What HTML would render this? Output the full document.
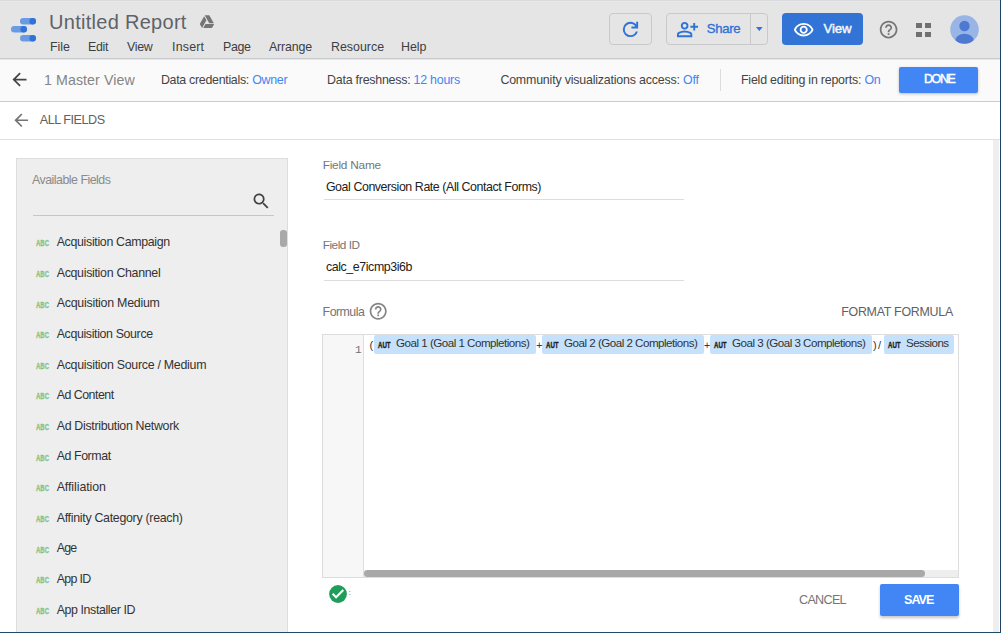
<!DOCTYPE html>
<html><head><meta charset="utf-8"><style>
html,body{margin:0;padding:0;}
body{width:1002px;height:634px;position:relative;overflow:hidden;background:#ffffff;font-family:"Liberation Sans", sans-serif;}
svg{display:block;}
</style></head><body>
<div style="position:absolute;left:0px;top:0px;width:1002px;height:58px;background:#e5e5e5;"></div>
<div style="position:absolute;left:0px;top:1px;width:1002px;height:1px;background:#e8e8e7;"></div>
<div style="position:absolute;left:0px;top:0px;width:1002px;height:1px;background:#dadbde;"></div>
<div style="position:absolute;left:0px;top:58px;width:1002px;height:1px;background:#c9cacd;"></div>
<svg style="position:absolute;left:20.10px;top:17.60px;" width="16" height="7" viewBox="0 0 16 7"><rect x="0" y="0" width="16" height="6.6" rx="3.3" fill="#6a9be2"/><circle cx="12.7" cy="3.3" r="3.3" fill="#2f72d8"/></svg>
<svg style="position:absolute;left:11.00px;top:26.10px;" width="16" height="7" viewBox="0 0 16 7"><rect x="0" y="0" width="16" height="6.6" rx="3.3" fill="#6a9be2"/><circle cx="12.7" cy="3.3" r="3.3" fill="#2f72d8"/></svg>
<svg style="position:absolute;left:20.10px;top:34.60px;" width="16" height="7" viewBox="0 0 16 7"><rect x="0" y="0" width="16" height="6.6" rx="3.3" fill="#6a9be2"/><circle cx="12.7" cy="3.3" r="3.3" fill="#2f72d8"/></svg>
<div id="title" style="position:absolute;left:49.00px;top:1.77px;line-height:40px;font-size:20px;color:#5f6368;font-weight:400;letter-spacing:0.286px;white-space:nowrap;">Untitled Report</div>
<svg style="position:absolute;left:199.20px;top:13.60px;" width="16" height="16" viewBox="0 0 24 24"><path fill="#757575" d="M7.71,3.5L1.15,15L4.58,21L11.13,9.5M9.73,15L6.3,21H19.42L22.85,15M22.28,14L15.42,2H8.58L8.57,2L15.43,14H22.28Z"/></svg>
<div id="menu0" style="position:absolute;left:50.00px;top:26.70px;line-height:40px;font-size:12.4px;color:#3c4043;font-weight:400;letter-spacing:0.0px;white-space:nowrap;">File</div>
<div id="menu1" style="position:absolute;left:88.00px;top:26.70px;line-height:40px;font-size:12.4px;color:#3c4043;font-weight:400;letter-spacing:-0.333px;white-space:nowrap;">Edit</div>
<div id="menu2" style="position:absolute;left:127.00px;top:26.70px;line-height:40px;font-size:12.4px;color:#3c4043;font-weight:400;letter-spacing:-0.333px;white-space:nowrap;">View</div>
<div id="menu3" style="position:absolute;left:172.00px;top:26.70px;line-height:40px;font-size:12.4px;color:#3c4043;font-weight:400;letter-spacing:0.2px;white-space:nowrap;">Insert</div>
<div id="menu4" style="position:absolute;left:223.00px;top:26.70px;line-height:40px;font-size:12.4px;color:#3c4043;font-weight:400;letter-spacing:-0.333px;white-space:nowrap;">Page</div>
<div id="menu5" style="position:absolute;left:269.00px;top:26.70px;line-height:40px;font-size:12.4px;color:#3c4043;font-weight:400;letter-spacing:-0.167px;white-space:nowrap;">Arrange</div>
<div id="menu6" style="position:absolute;left:331.00px;top:26.70px;line-height:40px;font-size:12.4px;color:#3c4043;font-weight:400;letter-spacing:0.0px;white-space:nowrap;">Resource</div>
<div id="menu7" style="position:absolute;left:401.00px;top:26.70px;line-height:40px;font-size:12.4px;color:#3c4043;font-weight:400;letter-spacing:0.0px;white-space:nowrap;">Help</div>
<div style="position:absolute;left:609px;top:13px;width:43px;height:32px;box-sizing:border-box;border:1px solid #c8c9cb;border-radius:4px;"></div>
<svg style="position:absolute;left:619.20px;top:18.20px;" width="22.95" height="22.95" viewBox="0 -960 960 960"><path fill="#2f72d8" d="M480-160q-134 0-227-93t-93-227q0-134 93-227t227-93q69 0 132 28.5T720-690v-110h80v280H520v-80h168q-32-56-87.5-88T480-720q-100 0-170 70t-70 170q0 100 70 170t170 70q77 0 139-44t87-116h84q-28 106-114 173t-196 67Z"/></svg>
<div style="position:absolute;left:666px;top:13px;width:102px;height:32px;box-sizing:border-box;border:1px solid #c8c9cb;border-radius:4px;"></div>
<div style="position:absolute;left:750px;top:13px;width:1px;height:32px;background:#c8c9cb;"></div>
<svg style="position:absolute;left:675.84px;top:20.00px;" width="23" height="23" viewBox="0 -960 960 960"><path fill="#2f72d8" d="M720-520v-120H600v-80h120v-120h80v120h120v80H800v120h-80Zm-360-40q-66 0-113-47t-47-113q0-66 47-113t113-47q66 0 113 47t47 113q0 66-47 113t-113 47ZM40-240v-112q0-34 17.5-62.5T104-458q62-31 126-46.5T360-520q66 0 130 15.5T616-458q29 15 46.5 43.5T680-352v112H40Zm80-80h480v-32q0-11-5.5-20T580-386q-54-27-109-40.5T360-440q-56 0-111 13.5T140-386q-9 5-14.5 14t-5.5 20v32Zm240-320q33 0 56.5-23.5T440-720q0-33-23.5-56.5T360-800q-33 0-56.5 23.5T280-720q0 33 23.5 56.5T360-640Zm0-80Zm0 400Z"/></svg>
<div id="share" style="position:absolute;left:706.70px;top:8.83px;line-height:40px;font-size:13.2px;color:#2f72d8;font-weight:400;letter-spacing:-0.3px;white-space:nowrap;-webkit-text-stroke:0.35px #2f72d8;">Share</div>
<svg style="position:absolute;left:755.80px;top:26.60px;" width="7" height="4.2" viewBox="0 0 7 4.2"><path d="M0 0h6.6L3.3 4.1z" fill="#2f72d8"/></svg>
<div style="position:absolute;left:782px;top:13px;width:81px;height:32px;background:#3174d6;border-radius:4px;"></div>
<svg style="position:absolute;left:793.10px;top:18.80px;" width="21.4" height="21.4" viewBox="0 0 24 24"><path fill="#ffffff" d="M12 6.5c3.79 0 7.17 2.13 8.82 5.5-1.65 3.37-5.02 5.5-8.82 5.5S4.83 15.37 3.18 12C4.830 8.63 8.21 6.5 12 6.5m0-2C7 4.5 2.73 7.61 1 12c1.73 4.39 6 7.5 11 7.5s9.27-3.11 11-7.5c-1.73-4.39-6-7.5-11-7.5zm0 5c1.38 0 2.5 1.12 2.5 2.5s-1.12 2.5-2.5 2.5-2.5-1.120-2.5-2.5 1.12-2.5 2.5-2.5m0-2c-2.48 0-4.5 2.02-4.5 4.5s2.02 4.5 4.5 4.5 4.5-2.02 4.5-4.5-2.02-4.5-4.5-4.5z"/></svg>
<div id="viewtxt" style="position:absolute;left:823.40px;top:9.43px;line-height:40px;font-size:13.2px;color:#f4f7fc;font-weight:400;letter-spacing:-0.033px;white-space:nowrap;-webkit-text-stroke:0.45px #f4f7fc;">View</div>
<svg style="position:absolute;left:877.80px;top:18.80px;" width="21.2" height="21.2" viewBox="0 0 24 24"><path fill="#757575" d="M11 18h2v-2h-2v2zm1-16C6.48 2 2 6.48 2 12s4.48 10 10 10 10-4.48 10-10S17.52 2 12 2zm0 18c-4.41 0-8-3.59-8-8s3.59-8 8-8 8 3.59 8 8-3.59 8-8 8zm0-14c-2.21 0-4 1.79-4 4h2c0-1.1.9-2 2-2s2 .9 2 2c0 2-3 1.75-3 5h2c0-2.25 3-2.5 3-5 0-2.21-1.79-4-4-4z"/></svg>
<div style="position:absolute;left:916.4px;top:22.9px;width:5.3px;height:5.2px;background:#707070;"></div>
<div style="position:absolute;left:916.4px;top:31.799999999999997px;width:5.3px;height:5.2px;background:#707070;"></div>
<div style="position:absolute;left:925.3px;top:22.9px;width:5.3px;height:5.2px;background:#707070;"></div>
<div style="position:absolute;left:925.3px;top:31.799999999999997px;width:5.3px;height:5.2px;background:#707070;"></div>
<svg style="position:absolute;left:949.50px;top:15.00px;" width="29" height="29" viewBox="0 0 29 29"><defs><clipPath id="av"><circle cx="14.5" cy="14.5" r="14.3"/></clipPath></defs><circle cx="14.5" cy="14.5" r="14.3" fill="#98b5e6"/><g clip-path="url(#av)"><circle cx="14.5" cy="11" r="5.2" fill="#4d79d0"/><ellipse cx="14.5" cy="25.5" rx="9.2" ry="6.8" fill="#4d79d0"/></g></svg>
<div style="position:absolute;left:0px;top:59px;width:1002px;height:42px;background:#fafafa;"></div>
<div style="position:absolute;left:0px;top:101px;width:1002px;height:1px;background:#cccccc;"></div>
<div style="position:absolute;left:0px;top:59px;width:1002px;height:1px;background:#e6e6e6;"></div>
<svg style="position:absolute;left:8.90px;top:69.40px;" width="21" height="21" viewBox="0 0 24 24"><path fill="#444444" d="M20 11H7.83l5.59-5.59L12 4l-8 8 8 8 1.41-1.41L7.83 13H20v-2z"/></svg>
<div id="master" style="position:absolute;left:44.10px;top:59.88px;line-height:40px;font-size:14.2px;color:#858585;font-weight:400;letter-spacing:0.075px;white-space:nowrap;">1 Master View</div>
<div id="p1" style="position:absolute;left:160.90px;top:60.30px;line-height:40px;font-size:12.4px;color:#444444;font-weight:400;letter-spacing:-0.286px;white-space:nowrap;">Data credentials: <span style="color:#4285f4">Owner</span></div>
<div id="p2" style="position:absolute;left:327.10px;top:60.30px;line-height:40px;font-size:12.4px;color:#444444;font-weight:400;letter-spacing:-0.235px;white-space:nowrap;">Data freshness: <span style="color:#4285f4">12 hours</span></div>
<div id="p3" style="position:absolute;left:500.40px;top:60.30px;line-height:40px;font-size:12.4px;color:#444444;font-weight:400;letter-spacing:-0.183px;white-space:nowrap;">Community visualizations access: <span style="color:#4285f4">Off</span></div>
<div style="position:absolute;left:720px;top:69px;width:1px;height:22px;background:#dddddd;"></div>
<div id="p4" style="position:absolute;left:741.00px;top:60.30px;line-height:40px;font-size:12.4px;color:#444444;font-weight:400;letter-spacing:-0.207px;white-space:nowrap;">Field editing in reports: <span style="color:#4285f4">On</span></div>
<div style="position:absolute;left:899px;top:67px;width:79px;height:26px;background:#4285f4;border-radius:2px;box-shadow:0 1px 3px rgba(0,0,0,0.25);"></div>
<div id="done" style="position:absolute;left:924.00px;top:58.70px;line-height:40px;font-size:12.4px;color:#ffffff;font-weight:400;letter-spacing:-1.333px;white-space:nowrap;-webkit-text-stroke:0.45px #ffffff;">DONE</div>
<div style="position:absolute;left:0px;top:139px;width:1002px;height:1px;background:#e0e0e0;"></div>
<svg style="position:absolute;left:10.90px;top:109.70px;" width="20.5" height="20.5" viewBox="0 0 24 24"><path fill="#757575" d="M20 11H7.83l5.59-5.59L12 4l-8 8 8 8 1.41-1.41L7.83 13H20v-2z"/></svg>
<div id="allfields" style="position:absolute;left:39.70px;top:99.53px;line-height:40px;font-size:12.6px;color:#616161;font-weight:400;letter-spacing:-0.456px;white-space:nowrap;">ALL FIELDS</div>
<div style="position:absolute;left:993px;top:140px;width:6px;height:492px;background:#eeeeee;"></div>
<div style="position:absolute;left:16px;top:158px;width:272px;height:480px;box-sizing:border-box;background:#eeeeee;border:1px solid #dddddd;"></div>
<div id="avail" style="position:absolute;left:32.00px;top:160.20px;line-height:40px;font-size:12.4px;color:#8a8a8a;font-weight:400;letter-spacing:-0.507px;white-space:nowrap;">Available Fields</div>
<svg style="position:absolute;left:251.35px;top:191.00px;" width="20.4" height="20.4" viewBox="0 0 24 24"><path fill="#424242" d="M15.5 14h-.79l-.28-.27C15.41 12.59 16 11.11 16 9.5 16 5.910 13.09 3 9.5 3S3 5.91 3 9.5 5.91 16 9.5 16c1.61 0 3.09-.59 4.23-1.57l.27.28v.79l5 4.99L20.49 19l-4.99-5zm-6 0C7.01 14 5 11.99 5 9.5S7.01 5 9.5 5 14 7.01 14 9.5 11.99 14 9.5 14z"/></svg>
<div style="position:absolute;left:33px;top:215px;width:241px;height:1px;background:#c6c6c6;"></div>
<div style="position:absolute;left:280px;top:230px;width:7px;height:17px;background:#a9a9a9;border-radius:3px;"></div>
<div id="abc0" style="position:absolute;left:35.70px;top:223.37px;line-height:40px;font-size:9.6px;color:#86c387;font-weight:700;letter-spacing:0px;white-space:nowrap;-webkit-text-stroke:0.3px #86c387;transform:scaleX(0.6238);transform-origin:0 0;">ABC</div>
<div id="f0" style="position:absolute;left:56.70px;top:222.10px;line-height:40px;font-size:12.4px;color:#333333;font-weight:400;letter-spacing:-0.332px;white-space:nowrap;">Acquisition Campaign</div>
<div id="abc1" style="position:absolute;left:35.70px;top:253.99px;line-height:40px;font-size:9.6px;color:#86c387;font-weight:700;letter-spacing:0px;white-space:nowrap;-webkit-text-stroke:0.3px #86c387;transform:scaleX(0.6238);transform-origin:0 0;">ABC</div>
<div id="f1" style="position:absolute;left:56.70px;top:252.72px;line-height:40px;font-size:12.4px;color:#333333;font-weight:400;letter-spacing:-0.306px;white-space:nowrap;">Acquisition Channel</div>
<div id="abc2" style="position:absolute;left:35.70px;top:284.61px;line-height:40px;font-size:9.6px;color:#86c387;font-weight:700;letter-spacing:0px;white-space:nowrap;-webkit-text-stroke:0.3px #86c387;transform:scaleX(0.6238);transform-origin:0 0;">ABC</div>
<div id="f2" style="position:absolute;left:56.70px;top:283.34px;line-height:40px;font-size:12.4px;color:#333333;font-weight:400;letter-spacing:-0.247px;white-space:nowrap;">Acquisition Medium</div>
<div id="abc3" style="position:absolute;left:35.70px;top:315.23px;line-height:40px;font-size:9.6px;color:#86c387;font-weight:700;letter-spacing:0px;white-space:nowrap;-webkit-text-stroke:0.3px #86c387;transform:scaleX(0.6238);transform-origin:0 0;">ABC</div>
<div id="f3" style="position:absolute;left:56.70px;top:313.96px;line-height:40px;font-size:12.4px;color:#333333;font-weight:400;letter-spacing:-0.365px;white-space:nowrap;">Acquisition Source</div>
<div id="abc4" style="position:absolute;left:35.70px;top:345.85px;line-height:40px;font-size:9.6px;color:#86c387;font-weight:700;letter-spacing:0px;white-space:nowrap;-webkit-text-stroke:0.3px #86c387;transform:scaleX(0.6238);transform-origin:0 0;">ABC</div>
<div id="f4" style="position:absolute;left:56.70px;top:344.58px;line-height:40px;font-size:12.4px;color:#333333;font-weight:400;letter-spacing:-0.277px;white-space:nowrap;">Acquisition Source / Medium</div>
<div id="abc5" style="position:absolute;left:35.70px;top:376.47px;line-height:40px;font-size:9.6px;color:#86c387;font-weight:700;letter-spacing:0px;white-space:nowrap;-webkit-text-stroke:0.3px #86c387;transform:scaleX(0.6238);transform-origin:0 0;">ABC</div>
<div id="f5" style="position:absolute;left:56.70px;top:375.20px;line-height:40px;font-size:12.4px;color:#333333;font-weight:400;letter-spacing:-0.511px;white-space:nowrap;">Ad Content</div>
<div id="abc6" style="position:absolute;left:35.70px;top:407.09px;line-height:40px;font-size:9.6px;color:#86c387;font-weight:700;letter-spacing:0px;white-space:nowrap;-webkit-text-stroke:0.3px #86c387;transform:scaleX(0.6238);transform-origin:0 0;">ABC</div>
<div id="f6" style="position:absolute;left:56.70px;top:405.82px;line-height:40px;font-size:12.4px;color:#333333;font-weight:400;letter-spacing:-0.318px;white-space:nowrap;">Ad Distribution Network</div>
<div id="abc7" style="position:absolute;left:35.70px;top:437.71px;line-height:40px;font-size:9.6px;color:#86c387;font-weight:700;letter-spacing:0px;white-space:nowrap;-webkit-text-stroke:0.3px #86c387;transform:scaleX(0.6238);transform-origin:0 0;">ABC</div>
<div id="f7" style="position:absolute;left:56.70px;top:436.44px;line-height:40px;font-size:12.4px;color:#333333;font-weight:400;letter-spacing:-0.425px;white-space:nowrap;">Ad Format</div>
<div id="abc8" style="position:absolute;left:35.70px;top:468.33px;line-height:40px;font-size:9.6px;color:#86c387;font-weight:700;letter-spacing:0px;white-space:nowrap;-webkit-text-stroke:0.3px #86c387;transform:scaleX(0.6238);transform-origin:0 0;">ABC</div>
<div id="f8" style="position:absolute;left:56.70px;top:467.06px;line-height:40px;font-size:12.4px;color:#333333;font-weight:400;letter-spacing:-0.08px;white-space:nowrap;">Affiliation</div>
<div id="abc9" style="position:absolute;left:35.70px;top:498.95px;line-height:40px;font-size:9.6px;color:#86c387;font-weight:700;letter-spacing:0px;white-space:nowrap;-webkit-text-stroke:0.3px #86c387;transform:scaleX(0.6238);transform-origin:0 0;">ABC</div>
<div id="f9" style="position:absolute;left:56.70px;top:497.68px;line-height:40px;font-size:12.4px;color:#333333;font-weight:400;letter-spacing:-0.296px;white-space:nowrap;">Affinity Category (reach)</div>
<div id="abc10" style="position:absolute;left:35.70px;top:529.57px;line-height:40px;font-size:9.6px;color:#86c387;font-weight:700;letter-spacing:0px;white-space:nowrap;-webkit-text-stroke:0.3px #86c387;transform:scaleX(0.6238);transform-origin:0 0;">ABC</div>
<div id="f10" style="position:absolute;left:56.70px;top:528.30px;line-height:40px;font-size:12.4px;color:#333333;font-weight:400;letter-spacing:-0.75px;white-space:nowrap;">Age</div>
<div id="abc11" style="position:absolute;left:35.70px;top:560.19px;line-height:40px;font-size:9.6px;color:#86c387;font-weight:700;letter-spacing:0px;white-space:nowrap;-webkit-text-stroke:0.3px #86c387;transform:scaleX(0.6238);transform-origin:0 0;">ABC</div>
<div id="f11" style="position:absolute;left:56.70px;top:558.92px;line-height:40px;font-size:12.4px;color:#333333;font-weight:400;letter-spacing:-0.68px;white-space:nowrap;">App ID</div>
<div id="abc12" style="position:absolute;left:35.70px;top:590.81px;line-height:40px;font-size:9.6px;color:#86c387;font-weight:700;letter-spacing:0px;white-space:nowrap;-webkit-text-stroke:0.3px #86c387;transform:scaleX(0.6238);transform-origin:0 0;">ABC</div>
<div id="f12" style="position:absolute;left:56.70px;top:589.54px;line-height:40px;font-size:12.4px;color:#333333;font-weight:400;letter-spacing:-0.4px;white-space:nowrap;">App Installer ID</div>
<div id="fn" style="position:absolute;left:322.70px;top:144.91px;line-height:40px;font-size:11.8px;color:#757575;font-weight:400;letter-spacing:-0.211px;white-space:nowrap;">Field Name</div>
<div id="fnv" style="position:absolute;left:325.90px;top:166.80px;line-height:40px;font-size:12.4px;color:#212121;font-weight:400;letter-spacing:-0.423px;white-space:nowrap;">Goal Conversion Rate (All Contact Forms)</div>
<div style="position:absolute;left:324px;top:199px;width:360px;height:1px;background:#dddddd;"></div>
<div id="fid" style="position:absolute;left:322.70px;top:224.91px;line-height:40px;font-size:11.8px;color:#757575;font-weight:400;letter-spacing:-0.457px;white-space:nowrap;">Field ID</div>
<div id="fidv" style="position:absolute;left:325.90px;top:246.80px;line-height:40px;font-size:12.4px;color:#212121;font-weight:400;letter-spacing:-0.407px;white-space:nowrap;">calc_e7icmp3i6b</div>
<div style="position:absolute;left:324px;top:280px;width:360px;height:1px;background:#dddddd;"></div>
<div id="formula" style="position:absolute;left:322.60px;top:292.30px;line-height:40px;font-size:12.4px;color:#757575;font-weight:400;letter-spacing:-0.533px;white-space:nowrap;">Formula</div>
<svg style="position:absolute;left:367.90px;top:300.70px;" width="20.4" height="20.4" viewBox="0 0 24 24"><path fill="#858585" d="M11 18h2v-2h-2v2zm1-16C6.48 2 2 6.48 2 12s4.48 10 10 10 10-4.48 10-10S17.52 2 12 2zm0 18c-4.41 0-8-3.59-8-8s3.59-8 8-8 8 3.59 8 8-3.59 8-8 8zm0-14c-2.21 0-4 1.79-4 4h2c0-1.1.9-2 2-2s2 .9 2 2c0 2-3 1.75-3 5h2c0-2.25 3-2.5 3-5 0-2.21-1.79-4-4-4z"/></svg>
<div id="fmt" style="position:absolute;left:841.20px;top:291.70px;line-height:40px;font-size:12.4px;color:#616161;font-weight:400;letter-spacing:-0.246px;white-space:nowrap;">FORMAT FORMULA</div>
<div style="position:absolute;left:322px;top:334px;width:637px;height:244px;box-sizing:border-box;border:1px solid #dddddd;background:#ffffff;"></div>
<div style="position:absolute;left:323px;top:335px;width:40px;height:242px;background:#f7f7f7;"></div>
<div style="position:absolute;left:363px;top:335px;width:1px;height:242px;background:#dddddd;"></div>
<div id="ln" style="position:absolute;left:355.00px;top:330.19px;line-height:40px;font-size:11px;color:#707070;font-weight:400;letter-spacing:0px;white-space:nowrap;font-family:'Liberation Mono',monospace;">1</div>
<div style="position:absolute;left:374px;top:335px;width:162px;height:18.5px;background:#c5e1fb;border-radius:2px;"></div>
<div id="aut0" style="position:absolute;left:378.00px;top:324.59px;line-height:40px;font-size:8.4px;color:#222222;font-weight:700;letter-spacing:0px;white-space:nowrap;-webkit-text-stroke:0.35px #222;transform:scaleX(0.7278);transform-origin:0 0;">AUT</div>
<div id="chip0" style="position:absolute;left:396.00px;top:322.78px;line-height:40px;font-size:11.6px;color:#333333;font-weight:400;letter-spacing:-0.5px;white-space:nowrap;">Goal 1 (Goal 1 Completions)</div>
<div style="position:absolute;left:542px;top:335px;width:162px;height:18.5px;background:#c5e1fb;border-radius:2px;"></div>
<div id="aut1" style="position:absolute;left:546.00px;top:324.59px;line-height:40px;font-size:8.4px;color:#222222;font-weight:700;letter-spacing:0px;white-space:nowrap;-webkit-text-stroke:0.35px #222;transform:scaleX(0.7278);transform-origin:0 0;">AUT</div>
<div id="chip1" style="position:absolute;left:564.00px;top:322.78px;line-height:40px;font-size:11.6px;color:#333333;font-weight:400;letter-spacing:-0.5px;white-space:nowrap;">Goal 2 (Goal 2 Completions)</div>
<div style="position:absolute;left:710px;top:335px;width:162px;height:18.5px;background:#c5e1fb;border-radius:2px;"></div>
<div id="aut2" style="position:absolute;left:714.00px;top:324.59px;line-height:40px;font-size:8.4px;color:#222222;font-weight:700;letter-spacing:0px;white-space:nowrap;-webkit-text-stroke:0.35px #222;transform:scaleX(0.7278);transform-origin:0 0;">AUT</div>
<div id="chip2" style="position:absolute;left:732.00px;top:322.78px;line-height:40px;font-size:11.6px;color:#333333;font-weight:400;letter-spacing:-0.5px;white-space:nowrap;">Goal 3 (Goal 3 Completions)</div>
<div style="position:absolute;left:884px;top:335px;width:70px;height:18.5px;background:#c5e1fb;border-radius:2px;"></div>
<div id="aut3" style="position:absolute;left:888.00px;top:324.59px;line-height:40px;font-size:8.4px;color:#222222;font-weight:700;letter-spacing:0px;white-space:nowrap;-webkit-text-stroke:0.35px #222;transform:scaleX(0.7278);transform-origin:0 0;">AUT</div>
<div id="chip3" style="position:absolute;left:906.00px;top:322.78px;line-height:40px;font-size:11.6px;color:#333333;font-weight:400;letter-spacing:-0.557px;white-space:nowrap;">Sessions</div>
<div id="lp" style="position:absolute;left:369.50px;top:325.19px;line-height:40px;font-size:11px;color:#333333;font-weight:400;letter-spacing:0px;white-space:nowrap;">(</div>
<div id="plus1" style="position:absolute;left:536.20px;top:325.16px;line-height:40px;font-size:10.5px;color:#333333;font-weight:400;letter-spacing:0px;white-space:nowrap;">+</div>
<div id="plus2" style="position:absolute;left:704.00px;top:325.16px;line-height:40px;font-size:10.5px;color:#333333;font-weight:400;letter-spacing:0px;white-space:nowrap;">+</div>
<div id="rp" style="position:absolute;left:873.00px;top:325.19px;line-height:40px;font-size:11px;color:#333333;font-weight:400;letter-spacing:0px;white-space:nowrap;">)</div>
<div id="slash" style="position:absolute;left:878.00px;top:325.19px;line-height:40px;font-size:11px;color:#333333;font-weight:400;letter-spacing:0px;white-space:nowrap;">/</div>
<div style="position:absolute;left:364px;top:570px;width:594px;height:7px;background:#eeeeee;"></div>
<div style="position:absolute;left:364px;top:570px;width:561px;height:6.5px;background:#a8a8a8;border-radius:3.5px;"></div>
<svg style="position:absolute;left:329.30px;top:584.60px;" width="18" height="18" viewBox="0 0 18 18"><circle cx="9" cy="9" r="8.9" fill="#1e9e5a"/><path d="M3.6 8.7L7.1 12.2L14.3 5" fill="none" stroke="#fff" stroke-width="2.1"/></svg>
<div id="colon" style="position:absolute;left:348.80px;top:573.40px;line-height:40px;font-size:7.5px;color:#444444;font-weight:400;letter-spacing:0px;white-space:nowrap;">:</div>
<div id="cancel" style="position:absolute;left:799.00px;top:579.63px;line-height:40px;font-size:12.6px;color:#757575;font-weight:400;letter-spacing:-0.7px;white-space:nowrap;">CANCEL</div>
<div style="position:absolute;left:880px;top:584px;width:79px;height:32px;background:#4285f4;border-radius:2px;box-shadow:0 2px 3px rgba(0,0,0,0.22);"></div>
<div id="save" style="position:absolute;left:904.00px;top:579.63px;line-height:40px;font-size:12.6px;color:#ffffff;font-weight:700;letter-spacing:-1.0px;white-space:nowrap;">SAVE</div>
<div style="position:absolute;left:1000px;top:0px;width:1px;height:633px;background:#1d4369;"></div>
<div style="position:absolute;left:0px;top:632px;width:1001px;height:1px;background:#1d4a66;"></div>
<div style="position:absolute;left:1001px;top:0px;width:1px;height:634px;background:#ffffff;"></div>
<div style="position:absolute;left:0px;top:633px;width:1002px;height:1px;background:#ffffff;"></div>
</body></html>
